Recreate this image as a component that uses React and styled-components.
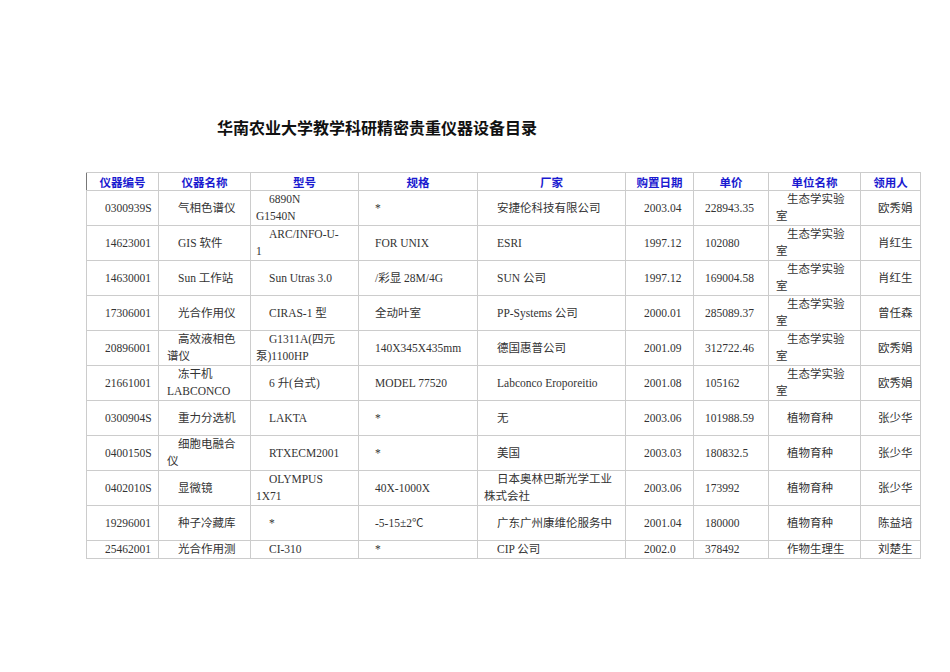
import styled, { createGlobalStyle } from 'styled-components';

const Global = createGlobalStyle`
  body { margin: 0; background: #fff; }
`;

const Page = styled.div`
  width: 950px;
  height: 672px;
  padding: 116px 0 0 86px;
  box-sizing: border-box;
`;

const Title = styled.h1`
  margin: 0 0 34px 131px;
  font: bold 16px "Noto Sans CJK SC", sans-serif;
  line-height: 22px;
  color: #111;
`;

const Table = styled.table`
  border-collapse: collapse;
  table-layout: fixed;
  width: 834px;
  border-left: 1px solid #777;
`;

const Head = styled.th`
  height: 17px;
  padding: 0;
  font: bold 11.5px "Noto Sans CJK SC", sans-serif;
  color: #1a1ad0;
  text-align: center;
  border: 1px solid #ccc;
  border-left-color: ${p => (p.$first ? '#777' : '#ccc')};
`;

const Row = styled.tr`
  height: ${p => (p.$clip ? '16px' : '35px')};
`;

const Cell = styled.td`
  padding: 0 ${p => p.$padR}px 0 ${p => p.$pad}px;
  text-indent: ${p => p.$indent}px;
  vertical-align: middle;
  font: 11.5px "Liberation Serif", "Noto Sans CJK SC", serif;
  line-height: 17px;
  color: #333;
  border: 1px solid #ccc;
  overflow: hidden;
  white-space: ${p => (p.$clip || p.$nowrap ? 'nowrap' : 'normal')};
  word-break: ${p => (p.$breakAll ? 'break-all' : 'normal')};
  height: ${p => (p.$clip ? '16px' : 'auto')};
`;

const cols = [
  { w: 72, pad: 18, padR: 0, indent: 0, nowrap: true, label: '仪器编号' },
  { w: 92, pad: 8, padR: 4, indent: 11, label: '仪器名称' },
  { w: 108, pad: 5, padR: 18, indent: 13, label: '型号' },
  { w: 119, pad: 16, padR: 2, indent: 0, label: '规格' },
  { w: 148, pad: 6, padR: 4, indent: 13, label: '厂家' },
  { w: 68, pad: 6, padR: 10, indent: 12, breakAll: true, label: '购置日期' },
  { w: 75, pad: 11, padR: 0, indent: 0, nowrap: true, label: '单价' },
  { w: 92, pad: 7, padR: 12, indent: 11, label: '单位名称' },
  { w: 60, pad: 17, padR: 0, indent: 0, nowrap: true, label: '领用人' },
];

const rows = [
  ['0300939S', '气相色谱仪', '6890N G1540N', '*', '安捷伦科技有限公司', '2003.04', '228943.35', '生态学实验室', '欧秀娟'],
  ['14623001', 'GIS 软件', 'ARC/INFO-U-1', 'FOR UNIX', 'ESRI', '1997.12', '102080', '生态学实验室', '肖红生'],
  ['14630001', 'Sun 工作站', 'Sun Utras 3.0', '/彩显 28M/4G', 'SUN 公司', '1997.12', '169004.58', '生态学实验室', '肖红生'],
  ['17306001', '光合作用仪', 'CIRAS-1 型', '全动叶室', 'PP-Systems 公司', '2000.01', '285089.37', '生态学实验室', '曾任森'],
  ['20896001', '高效液相色谱仪', 'G1311A(四元泵)1100HP', '140X345X435mm', '德国惠普公司', '2001.09', '312722.46', '生态学实验室', '欧秀娟'],
  ['21661001', '冻干机 LABCONCO', '6 升(台式)', 'MODEL 77520', 'Labconco Eroporeitio', '2001.08', '105162', '生态学实验室', '欧秀娟'],
  ['0300904S', '重力分选机', 'LAKTA', '*', '无', '2003.06', '101988.59', '植物育种', '张少华'],
  ['0400150S', '细胞电融合仪', 'RTXECM2001', '*', '美国', '2003.03', '180832.5', '植物育种', '张少华'],
  ['0402010S', '显微镜', 'OLYMPUS 1X71', '40X-1000X', '日本奥林巴斯光学工业株式会社', '2003.06', '173992', '植物育种', '张少华'],
  ['19296001', '种子冷藏库', '*', '-5-15±2℃', '广东广州康维伦服务中', '2001.04', '180000', '植物育种', '陈益培'],
  ['25462001', '光合作用测', 'CI-310', '*', 'CIP 公司', '2002.0', '378492', '作物生理生', '刘楚生'],
];

export default function App() {
  return (
    <Page>
      <Global />
      <Title>华南农业大学教学科研精密贵重仪器设备目录</Title>
      <Table>
        <colgroup>
          {cols.map((c, i) => <col key={i} style={{ width: c.w }} />)}
        </colgroup>
        <thead>
          <tr>
            {cols.map((c, i) => <Head key={i} $first={i === 0}>{c.label}</Head>)}
          </tr>
        </thead>
        <tbody>
          {rows.map((r, ri) => {
            const clip = ri === rows.length - 1;
            return (
              <Row key={ri} $clip={clip}>
                {r.map((v, ci) => {
                  const c = cols[ci];
                  return (
                    <Cell key={ci} $pad={c.pad} $padR={c.padR} $indent={c.indent}
                      $nowrap={c.nowrap} $breakAll={c.breakAll} $clip={clip}>{v}</Cell>
                  );
                })}
              </Row>
            );
          })}
        </tbody>
      </Table>
    </Page>
  );
}
